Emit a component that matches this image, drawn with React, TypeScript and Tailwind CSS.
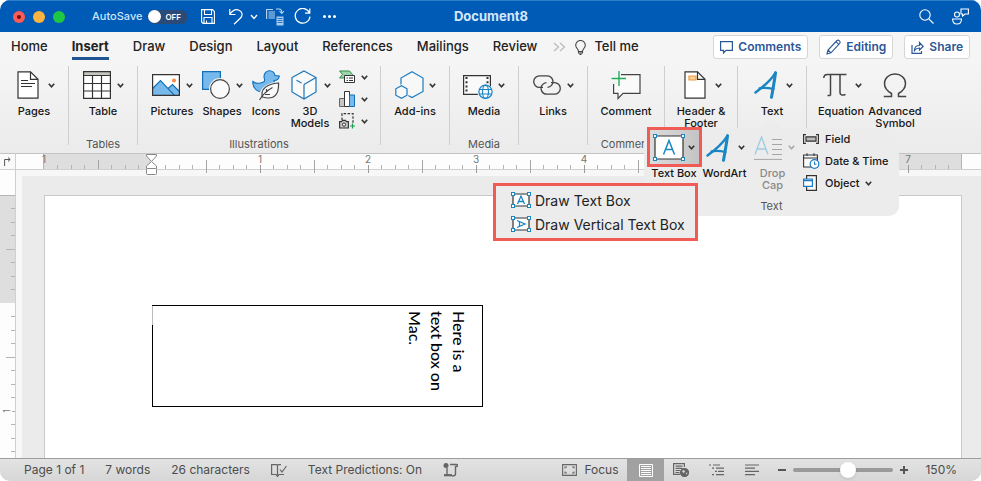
import { useState } from "react"
import type { ReactNode } from "react"

const INCH = 108

function Chevron({ faded }: { faded?: boolean }) {
  return (
    <svg width="7" height="5" viewBox="0 0 7 5" fill="none" className={faded ? "text-[#aaa]" : "text-[#333]"}>
      <path d="M0.8 0.8 3.5 3.8 6.2 0.8" stroke="currentColor" strokeWidth="1.6" />
    </svg>
  )
}

interface ToolProps {
  label: ReactNode
  icon: ReactNode
  menu?: boolean
  width?: string
}

function Tool({ label, icon, menu, width = "w-[50px]" }: ToolProps) {
  return (
    <button className={`flex flex-col items-center pt-2 ${width}`}>
      <span className="flex h-[30px] items-center gap-[5px]">
        <span className="flex w-[30px] justify-center">{icon}</span>
        {menu && <Chevron />}
      </span>
      <span className="mt-[5px] whitespace-nowrap text-center text-[11px] font-medium leading-[12px] text-[#161616]">{label}</span>
    </button>
  )
}

function Group({ caption, width, children, last }: { caption?: string; width: string; children: ReactNode; last?: boolean }) {
  return (
    <>
      <div className={`flex shrink-0 flex-col ${width}`}>
        <div className="flex h-[76px] justify-center">{children}</div>
        <p className="text-center text-[11px] leading-[12px] text-[#555]">{caption}</p>
      </div>
      {!last && <div className="mt-1 h-[79px] w-px shrink-0 bg-[#cfcfcf]" />}
    </>
  )
}

/* ---------- ribbon icons ---------- */

function PagesIcon() {
  return (
    <svg width="22" height="28" viewBox="0 0 22 28" fill="none" stroke="#333" strokeWidth="1.2">
      <path d="M1 .8H13.5L21 8.3V27.2H1Z" fill="#fff" />
      <path d="M13.5.8V8.3H21M4 9.5h7M4 12.5h14M4 15.5h11" />
    </svg>
  )
}

function TableIcon() {
  return (
    <svg width="28" height="28" viewBox="0 0 28 28" fill="none" stroke="#333" strokeWidth="1.2">
      <path d="M.6.6H27.4V27.4H.6Z" fill="#fff" />
      <path d="M.6.6H27.4V4.5H.6Z" fill="#c4c6c0" />
      <path d="M.6 12.5H27.4M.6 20H27.4M9.5 4.5V27.4M18.5 4.5V27.4" />
    </svg>
  )
}

function PicturesIcon() {
  return (
    <svg width="28" height="28" viewBox="0 0 28 28" fill="none">
      <path d="M.6 3.6H27.4V24.4H.6Z" fill="#fff" />
      <path d="M.6 17.5 8.5 9.5 16 17.5 20.5 13.5 27.4 20.5V24.4H.6Z" fill="#76b9ea" />
      <path d="M.6 17.5 8.5 9.5 22.5 24.4M16 17.5 20.5 13.5 27.4 20.5" stroke="#0f6fba" strokeWidth="1.2" />
      <circle cx="22" cy="9.5" r="2" fill="#f48b45" />
      <path d="M.6 3.6H27.4V24.4H.6Z" stroke="#333" strokeWidth="1.2" />
    </svg>
  )
}

function ShapesIcon() {
  return (
    <svg width="28" height="28" viewBox="0 0 28 28">
      <path d="M.6.6H18.4V18.4H.6Z" fill="#76b9ea" stroke="#0f6fba" strokeWidth="1.2" />
      <circle cx="18" cy="18" r="11" fill="#f2f2f2" />
      <circle cx="18" cy="18" r="9.4" fill="#fafafa" stroke="#444" strokeWidth="1.2" />
    </svg>
  )
}

function DuckIcon() {
  return (
    <svg width="28" height="30" viewBox="0 0 28 30">
      <path
        d="M.8 11.5C4 14 8 13.5 11.5 12 14 11 12 9 12 6.5 12 3 14.5.8 17.500.8 20.5.8 22.8 3 22.9 5.5L27.3 6C27 9 25 10.5 22 10.5 22 13 25 14 24.5 17.5 23.5 21.5 19 22.5 14 22.5 6 22.5.5 19 .8 11.5Z"
        fill="#76b9ea" stroke="#0f6fba" strokeWidth="1.1"
      />
      <path d="M7 30C6 20 12 13 28 11V20C26 29 19 31 10 28.5Z" fill="#f1f1f1" />
      <path d="M10.5 27C8 19 15 14 26.5 13 27 22 24 31 10.5 27Z" fill="#fafafa" stroke="#444" strokeWidth="1.2" />
      <path d="M7.5 30C11 24 15 20.5 20.5 17.5M14.5 22.5V19M13 24.5H18" fill="none" stroke="#444" strokeWidth="1.1" />
    </svg>
  )
}

function CubeIcon() {
  return (
    <svg width="26" height="30" viewBox="0 0 26 30" fill="none" stroke="#1a75ba" strokeWidth="1.2">
      <path d="M13 1 25 7.5V22L13 29 1 22V7.5Z" fill="#fafafa" />
      <path d="M13 14.5 25 7.5M13 14.5V29M5.5 10.2 10.5 13" />
    </svg>
  )
}

function SmartArtIcon() {
  return (
    <svg width="16" height="14" viewBox="0 0 16 14">
      <path d="M.6 1H10.5L13.5 4.5 10.5 8H.6L3.5 4.5Z" fill="#9bd6a8" stroke="#2f8c4b" />
      <path d="M5.5 5.5H15.5V12.5H5.5Z" fill="#fff" stroke="#333" />
      <path d="M7.5 8H9M10 8H14M7.5 10.5H9M10 10.5H14" stroke="#333" />
    </svg>
  )
}

function BarsIcon() {
  return (
    <svg width="16" height="16" viewBox="0 0 16 16">
      <path d="M.5 7.5H5.5V15.5H.5Z" fill="#c6c6c6" stroke="#666" />
      <path d="M5.5.5H10.5V15.5H5.5Z" fill="#fff" stroke="#333" />
      <path d="M10.5 4H15.5V15.5H10.5Z" fill="#76b9ea" stroke="#0f6fba" />
    </svg>
  )
}

function ScreenshotIcon() {
  return (
    <svg width="17" height="16" viewBox="0 0 17 16" fill="none">
      <path d="M3 7V.6H14V10" stroke="#333" strokeWidth="1.2" strokeDasharray="2.5 1.5" />
      <path d="M.6 8.6H2.5L3.5 7.4H6.5L7.5 8.6H9.4V15H.6Z" fill="#c6c6c6" stroke="#333" strokeWidth="1.1" />
      <circle cx="5" cy="11.6" r="1.6" fill="#fff" stroke="#333" />
      <path d="M13.5 10.5V15.5M11 13H16" stroke="#1d9e4f" strokeWidth="1.2" />
    </svg>
  )
}

function AddInsIcon() {
  return (
    <svg width="29" height="28" viewBox="0 0 29 28" fill="#f8f8f8" stroke="#1a7cc2" strokeWidth="1.2">
      <path d="M17 .8 28 7V20.5L17 26.5 6 20.5V7Z" />
      <path d="M6.5 13 13.5 17V25L6.5 29-.5 25V17Z" fill="#f0f0f0" stroke="none" />
      <path d="M6.5 14.7 12 17.8V24.2L6.5 27.3 .8 24.2V17.8Z" />
    </svg>
  )
}

function MediaIcon() {
  return (
    <svg width="30" height="28" viewBox="0 0 30 28" fill="none">
      <path d="M.6 4.6H27.4V23.4H.6Z" fill="#fafafa" stroke="#333" strokeWidth="1.2" />
      <path d="M3.5 6V22.5M24.5 6V22.5" stroke="#333" strokeWidth="2" strokeDasharray="2 2.2" />
      <circle cx="22.5" cy="21.5" r="8" fill="#f1f1f1" />
      <g stroke="#1a86c8" strokeWidth="1.2">
        <circle cx="22.5" cy="20.8" r="6.6" fill="#fafafa" />
        <ellipse cx="22.5" cy="20.8" rx="3" ry="6.6" />
        <path d="M16.5 18.5H28.5M16.5 23H28.5" />
      </g>
    </svg>
  )
}

function LinksIcon() {
  return (
    <svg width="28" height="20" viewBox="0 0 28 20" fill="none" stroke="#444" strokeWidth="1.3">
      <path d="M10 12.4H6.5A5.8 5.8 0 0 1 6.5.8H14A5.8 5.8 0 0 1 18.5 10.4 5.8 5.8 0 0 1 14.5 12.4" />
      <path d="M18 7.6H21.5A5.8 5.8 0 0 1 21.5 19.2H14A5.8 5.8 0 0 1 9.5 9.6 5.8 5.8 0 0 1 13.5 7.6" />
    </svg>
  )
}

function CommentIcon() {
  return (
    <svg width="30" height="30" viewBox="0 0 30 30" fill="none">
      <path d="M2.6 4.6H29V23.4H12L7 28.5V23.4H2.6Z" fill="#fafafa" stroke="#444" strokeWidth="1.2" />
      <path d="M0 1H8V14H0Z" fill="#f2f2f2" />
      <path d="M8 1V16M0 8.5H15" stroke="#fafafa" strokeWidth="4" />
      <path d="M8 1V16M.5 8.5H15" stroke="#1fae5a" strokeWidth="1.4" />
    </svg>
  )
}

function HeaderIcon() {
  return (
    <svg width="22" height="28" viewBox="0 0 22 28" fill="none" stroke="#333" strokeWidth="1.2">
      <path d="M1 .8H13.5L21 8.3V27.2H1Z" fill="#fff" />
      <path d="M13.5.8V8.3H21" />
      <path d="M5 5H12V9H5Z" fill="#fbd29a" stroke="#f09a3e" />
    </svg>
  )
}

function BrushA({ width = 24, height = 28 }: { width?: number; height?: number }) {
  return (
    <svg width={width} height={height} viewBox="0 0 24 28" fill="none" stroke="#1a86c2" strokeLinejoin="round" strokeLinecap="round">
      <path d="M1.5 21.5C9 16 17 9 21.5 1.8" strokeWidth="2.5" />
      <path d="M21.5 1.8C20.500 10 19 18 17.5 26.3" strokeWidth="3" />
      <path d="M5.5 17.3C10 16.6 15 17 19.5 18" strokeWidth="2.2" />
    </svg>
  )
}

function PiIcon() {
  return (
    <svg width="24" height="24" viewBox="0 0 24 24" fill="none" stroke="#444" strokeWidth="1.5">
      <path d="M.8 5C.8 2.5 2 1.5 4.5 1.5H23.5M7.5 1.5V22.5M4.5 22.5H7.5M17 1.5V19.5C17 22 19 22.7 22.5 21.5" />
    </svg>
  )
}

function OmegaIcon() {
  return (
    <svg width="24" height="25" viewBox="0 0 24 25" fill="none" stroke="#444" strokeWidth="1.5">
      <path d="M.8 23.5H8.5V20.5C4 18 1.5 15 1.5 10.5 1.5 5 6 1 12 1S22.5 5 22.5 10.5C22.5 15 20 18 15.5 20.5V23.5H23.2" />
    </svg>
  )
}

function Handles({ w, h }: { w: number; h: number }) {
  const spots = [[1, 1], [w - 1, 1], [1, h - 1], [w - 1, h - 1]]
  return (
    <>
      {spots.map(([x, y]) => (
        <rect key={`${x}-${y}`} x={x - 1.5} y={y - 1.5} width="3" height="3" fill="#fff" stroke="#1a86c2" />
      ))}
    </>
  )
}

function TextBoxIcon() {
  return (
    <svg width="32" height="27" viewBox="-1 -1 32 27" fill="none" className="shrink-0">
      <path d="M1 1H29V24H1Z" fill="#fff" stroke="#333" strokeWidth="1.2" />
      <path d="M9.5 19.5 15 5.5 20.5 19.5M11.5 14.5H18.5" stroke="#1a86c2" strokeWidth="1.5" />
      <Handles w={30} h={25} />
    </svg>
  )
}

function SmallBoxIcon({ vertical }: { vertical?: boolean }) {
  return (
    <svg width="20" height="16" viewBox="-1 -1 20 16" fill="none" className="shrink-0">
      <path d="M1 1H17V13H1Z" fill="#fff" stroke="#333" strokeWidth="1.2" />
      <path
        d="M5.5 11 9 3 12.5 11M6.8 8.5H11.2"
        stroke="#1a86c2"
        strokeWidth="1.3"
        transform={vertical ? "rotate(90 9 7)" : undefined}
      />
      <Handles w={18} h={14} />
    </svg>
  )
}

function DropCapIcon() {
  return (
    <svg width="29" height="24" viewBox="0 0 29 24" fill="none">
      <path d="M1 18.5 7.5 1 14 18.5M3.5 13H11.5" stroke="#9ccbe0" strokeWidth="1.3" />
      <path d="M18 3.5H28M18 8.5H28M18 13.5H28M18 18.5H28M0 23.4H28" stroke="#a6a6a6" />
    </svg>
  )
}

function FieldIcon() {
  return (
    <svg width="16" height="10" viewBox="0 0 16 10" fill="none" stroke="#333" strokeWidth="1.2">
      <path d="M3 .6H.6V9.4H3M13 .6H15.4V9.4H13" />
      <path d="M3 2.8H13V7.2H3Z" fill="#bbb" />
    </svg>
  )
}

function DateIcon() {
  return (
    <svg width="17" height="16" viewBox="0 0 17 16" fill="none" stroke="#333" strokeWidth="1.1">
      <path d="M.6 2H14.4V14H.6Z" fill="#fafafa" />
      <path d="M.6 5H14.4M4 .3V3M11 .3V3" />
      <circle cx="11.5" cy="11" r="4.3" fill="#fff" stroke="#1a7cc2" strokeWidth="1.2" />
      <path d="M11.5 8.5V11.2H13.5" stroke="#1a7cc2" />
    </svg>
  )
}

function ObjectIcon() {
  return (
    <svg width="15" height="16" viewBox="0 0 15 16" fill="none" strokeWidth="1.2">
      <path d="M3.6.6H13.4V15.4H3.6Z" fill="#fafafa" stroke="#333" />
      <path d="M.6 4H9.4V11.4H.6Z" fill="#fff" stroke="#1a7cc2" />
      <path d="M.6 5.5H9.4" stroke="#1a7cc2" strokeWidth="1.6" />
    </svg>
  )
}

/* ---------- title bar ---------- */

function TitleBar() {
  const [autoSave, setAutoSave] = useState(false)
  return (
    <header className="flex h-8 shrink-0 items-center border-t border-[#2d7fca] bg-[#005bb7] text-white">
      <div className="flex flex-1 items-center pl-[13px]">
        <div className="flex gap-2">
          <button aria-label="Close" className="flex size-3 items-center justify-center rounded-full bg-[#fc5b57]">
            <span className="size-1 rounded-full bg-[#730c0a]" />
          </button>
          <button aria-label="Minimize" className="size-3 rounded-full bg-[#fdb43f]" />
          <button aria-label="Zoom" className="size-3 rounded-full bg-[#1ec845]" />
        </div>
        <label className="relative ml-[27px] flex items-center gap-[6px] text-[11px] font-medium text-[#cfe4f8]">
          AutoSave
          <input type="checkbox" className="sr-only" checked={autoSave} onChange={e => setAutoSave(e.target.checked)} />
          <span className="flex h-[14px] w-10 items-center gap-[4px] rounded-full bg-[#2a4a78] text-[8px] font-semibold text-white">
            <span className="size-[13px] rounded-full bg-white" />
            OFF
          </span>
        </label>
        <button aria-label="Save" className="ml-[13px]">
          <svg width="14" height="15" viewBox="0 0 14 15" fill="none" stroke="#fff" strokeWidth="1.1">
            <path d="M.6.6H11.5L13.4 2.5V14.4H2L.6 13Z" />
            <path d="M3.5.6V5.5H10.5V.6M3 14.4V8.5H11V14.4M5.5 11.5V14.4" />
          </svg>
        </button>
        <button aria-label="Undo" className="ml-[14px]">
          <svg width="14" height="17" viewBox="0 0 14 17" fill="none" stroke="#fff" strokeWidth="1.2">
            <path d="M.8 1V6.5H6.5M.8 6.5C3.5 2.5 7 1 10 2.2 13.5 3.7 14 7.5 11.5 10L5 16.3" />
          </svg>
        </button>
        <button aria-label="Undo history" className="ml-[7px]">
          <svg width="8" height="6" viewBox="0 0 8 6" fill="none" stroke="#fff" strokeWidth="1.3"><path d="M1 1 4 4.5 7 1" /></svg>
        </button>
        <button aria-label="Paste special" className="ml-2">
          <svg width="18" height="18" viewBox="0 0 18 18" fill="none" stroke="#b9d7f3" strokeWidth="1.1">
            <path d="M.6 11V1.5H7M2.5 4H9M2.5 6H9M2.5 8H9M2.5 10H9M10 1H13C15 1 15.8 2.5 15.8 4.5M13.5 3 15.8 5.5 18 3" />
            <path d="M10.5 8.5H17.5V17.5H10.5Z" fill="#a9cdef" stroke="none" />
            <path d="M11.5 10.5H16.5M11.5 12.5H16.5M11.5 14.5H16.5" stroke="#2a74c2" />
          </svg>
        </button>
        <button aria-label="Redo" className="ml-[10px]">
          <svg width="17" height="17" viewBox="0 0 17 17" fill="none" stroke="#fff" strokeWidth="1.2">
            <path d="M15.5 5A7.4 7.4 0 1 0 16 8.5M15.8.5V5.2H11" />
          </svg>
        </button>
        <button aria-label="More" className="ml-3 flex gap-[2px]">
          <span className="size-[3px] rounded-full bg-white" />
          <span className="size-[3px] rounded-full bg-white" />
          <span className="size-[3px] rounded-full bg-white" />
        </button>
      </div>
      <h1 className="text-[13px] font-bold text-[#d5e8fb]">Document8</h1>
      <div className="flex flex-1 items-center justify-end gap-[18px] pr-3">
        <button aria-label="Search">
          <svg width="15" height="15" viewBox="0 0 15 15" fill="none" stroke="#fff" strokeWidth="1.1">
            <circle cx="6" cy="6" r="5.2" />
            <path d="M9.8 9.8 14.5 14.5" />
          </svg>
        </button>
        <button aria-label="Presence">
          <svg width="17" height="17" viewBox="0 0 17 17" fill="none" stroke="#fff" strokeWidth="1.1">
            <circle cx="5" cy="6.5" r="2.5" />
            <path d="M.6 11H9.5C9.5 14.5 8 16 5 16S.6 14.5.6 11ZM9 1H16.4V6H13L10.5 8V6H9Z" />
          </svg>
        </button>
      </div>
    </header>
  )
}

/* ---------- tabs ---------- */

const tabs = ["Home", "Insert", "Draw", "Design", "Layout", "References", "Mailings", "Review"]

function TabRow() {
  const [active, setActive] = useState("Insert")
  const action = "flex h-6 items-center gap-[5px] rounded-[3px] border border-[#d6d6d6] bg-white px-[6px] text-[12px] font-semibold text-[#2b5797]"
  return (
    <nav className="flex h-[30px] shrink-0 items-center justify-between bg-[#f5f5f5] pl-[11px] pr-[11px]">
      <div className="flex items-center gap-6 text-[13px] font-medium text-[#222]">
        {tabs.map(tab => (
          <button
            key={tab}
            onClick={() => setActive(tab)}
            className={`flex h-[26px] items-center border-y-[3px] border-t-transparent ${tab === active ? "border-b-[#1f5592] font-bold" : "border-b-transparent"}`}
          >
            {tab}
          </button>
        ))}
        <div className="-ml-2 flex items-center gap-[9px]">
          <button aria-label="More tabs">
            <svg width="13" height="10" viewBox="0 0 13 10" fill="none" stroke="#bbb" strokeWidth="1.3"><path d="M1 1 5.5 5 1 9M7 1 11.5 5 7 9" /></svg>
          </button>
          <button className="flex items-center gap-2">
            <svg width="11" height="15" viewBox="0 0 11 15" fill="none" stroke="#444" strokeWidth="1.1">
              <path d="M3.5 11.5C3.5 9 .7 8 .7 5.2A4.8 4.7 0 0 1 10.3 5.2C10.3 8 7.5 9 7.5 11.5ZM3.5 11.5V13H7.5V11.5M4.5 14.4H6.5" />
            </svg>
            Tell me
          </button>
        </div>
      </div>
      <div className="flex gap-[11px]">
        <button className={action}>
          <svg width="13" height="13" viewBox="0 0 13 13" fill="none" stroke="currentColor" strokeWidth="1.2"><path d="M.6.6H12.4V9.4H6L3.5 12V9.4H.6Z" /></svg>
          Comments
        </button>
        <button className={action}>
          <svg width="15" height="16" viewBox="0 0 15 16" fill="none" stroke="currentColor" strokeWidth="1.1">
            <path d="M1 15 2 11 11 1.5C12.5 .3 15 2.5 13.7 4.3L5 13.8ZM10 2.7 12.7 5.4M2 11 5 13.8" />
          </svg>
          Editing
        </button>
        <button className={action}>
          <svg width="13" height="13" viewBox="0 0 13 13" fill="none" stroke="currentColor" strokeWidth="1.2">
            <path d="M1 4V12.4H10.5V10M3.5 9.5C3.5 6 5.5 4.5 8.5 4.5V1.5L12.2 5.5 8.5 9V7C6 7 4.5 8 3.5 9.5Z" />
          </svg>
          Share
        </button>
      </div>
    </nav>
  )
}

/* ---------- ribbon ---------- */

function Ribbon() {
  const mini = "flex h-[22px] w-8 items-center justify-between pr-[3px]"
  return (
    <section className="relative z-10 flex h-[92px] shrink-0 border-b border-[#c4c4c4] bg-gradient-to-b from-[#f5f5f5] to-[#ebebeb]">
      <Group width="w-[68px]"><Tool label="Pages" icon={<PagesIcon />} menu /></Group>
      <Group width="w-[68px]" caption="Tables"><Tool label="Table" icon={<TableIcon />} menu /></Group>
      <Group width="w-[242px]" caption="Illustrations">
        <Tool label="Pictures" icon={<PicturesIcon />} menu />
        <Tool label="Shapes" icon={<ShapesIcon />} menu />
        <Tool label="Icons" icon={<DuckIcon />} width="w-[38px]" />
        <Tool label={<>3D<br />Models</>} icon={<CubeIcon />} menu />
        <div className="ml-1 flex flex-col pt-1">
          <button aria-label="SmartArt" className={mini}><SmartArtIcon /><Chevron /></button>
          <button aria-label="Chart" className={mini}><BarsIcon /><Chevron /></button>
          <button aria-label="Screenshot" className={mini}><ScreenshotIcon /><Chevron /></button>
        </div>
      </Group>
      <Group width="w-[68px]"><Tool label="Add-ins" icon={<AddInsIcon />} menu /></Group>
      <Group width="w-[68px]" caption="Media"><Tool label="Media" icon={<MediaIcon />} menu /></Group>
      <Group width="w-[68px]"><Tool label="Links" icon={<LinksIcon />} menu /></Group>
      <Group width="w-[76px]" caption="Comment"><Tool label="Comment" icon={<CommentIcon />} /></Group>
      <Group width="w-[72px]"><Tool label={<>Header &amp;<br />Footer</>} icon={<HeaderIcon />} menu /></Group>
      <Group width="w-[68px]"><Tool label="Text" icon={<BrushA />} menu /></Group>
      <Group width="w-[122px]" last>
        <Tool label="Equation" icon={<PiIcon />} menu width="w-[54px]" />
        <Tool label={<>Advanced<br />Symbol</>} icon={<OmegaIcon />} width="w-[54px]" />
      </Group>
      <TextPanel />
    </section>
  )
}

function TextPanel() {
  const small = "whitespace-nowrap text-center text-[11px] font-medium leading-[12px]"
  return (
    <div className="absolute left-[644px] top-[66px] h-[88px] w-[255px] rounded-r-[10px] bg-[#ececec]">
      <svg width="22" height="9" viewBox="0 0 22 9" className="absolute -top-[9px] left-[116px]"><path d="M0 9 11 0 22 9Z" fill="#ececec" /></svg>
      <div className="flex items-start">
        <button className="-mt-px flex w-[60px] flex-col items-center text-[#161616]">
          <span className="flex h-10 w-[55px] items-center justify-center gap-[3px] border-[3px] border-[#f05b55] bg-gradient-to-r from-[#dcdcdc] to-[#c4c4c4]">
            <TextBoxIcon />
            <Chevron />
          </span>
          <span className={small}>Text Box</span>
        </button>
        <button className="flex w-[41px] flex-col items-center text-[#161616]">
          <span className="flex h-[39px] items-center gap-[7px]"><BrushA width={26} height={28} /><Chevron /></span>
          <span className={small}>WordArt</span>
        </button>
        <button disabled className="flex w-[55px] flex-col items-center text-[#8a8a8a]">
          <span className="flex h-[39px] items-center gap-[5px] pl-1"><DropCapIcon /><Chevron faded /></span>
          <span className={small}>Drop<br />Cap</span>
        </button>
        <div className="ml-[3px] flex flex-col text-[11px] font-medium text-[#161616]">
          <button className="flex h-[22px] items-center gap-[5px]"><span className="w-[17px]"><FieldIcon /></span>Field</button>
          <button className="flex h-[22px] items-center gap-[5px] whitespace-nowrap"><span className="w-[17px]"><DateIcon /></span>Date &amp; Time</button>
          <button className="flex h-[22px] items-center gap-[5px]"><span className="w-[17px]"><ObjectIcon /></span>Object<Chevron /></button>
        </div>
      </div>
      <p className="absolute inset-x-0 bottom-1 text-center text-[11px] leading-[12px] text-[#555]">Text</p>
      <div className="absolute -left-[151px] top-[55px] flex w-[205px] flex-col border-[3px] border-[#f05b55] bg-[#ececec] py-[2px] pl-[15px] text-[14px] text-[#222]">
        <button className="flex h-6 items-center gap-[4px] whitespace-nowrap"><SmallBoxIcon />Draw Text Box</button>
        <button className="flex h-6 items-center gap-[4px] whitespace-nowrap"><SmallBoxIcon vertical />Draw Vertical Text Box</button>
      </div>
    </div>
  )
}

/* ---------- rulers ---------- */

function HorizontalRuler() {
  const zero = 136
  const steps = Array.from({ length: 68 }, (_, i) => i - 7)
  return (
    <svg className="h-[22px] w-full shrink-0">
      <rect width="100%" height="15" fill="#fdfdfd" />
      <rect x="27" width="108" height="15" fill="#dedede" />
      <rect x="838" width="108" height="15" fill="#dedede" />
      <rect y="15" width="100%" height="1" fill="#d0d0d0" />
      <path d="M27.5 0V15M945.5 0V15" stroke="#b5b5b5" />
      {steps.map(i => {
        const x = Math.floor(zero + (i * INCH) / 8)
        if (i === 0 || x > 944) return null
        if (i % 8 === 0) return <rect key={i} x={x} y="11" width="1" height="8" fill="#9a9a9a" />
        if (i % 4 === 0) return <rect key={i} x={x} y="6" width="1" height={i < 0 ? 9 : 13} fill="#a5a5a5" />
        return <rect key={i} x={x} y="11" width="1" height="4" fill="#b5b5b5" />
      })}
      {[1, 2, 3, 4, 5, 6, 7].map(n => (
        <text key={n} x={zero + n * INCH} y="9" textAnchor="middle" fontSize="10" fill="#777">{n}</text>
      ))}
      <text x="28" y="9" textAnchor="middle" fontSize="10" fill="#777">1</text>
      <g fill="#fff" stroke="#888">
        <path d="M130.5 .5H140.5V2L135.5 7.5 130.5 2Z" />
        <path d="M135.5 7.5 140.5 12V14.5H130.5V12Z" />
        <rect x="130.5" y="14.5" width="10" height="6" rx="1" />
      </g>
    </svg>
  )
}

function VerticalRuler() {
  // starts 25px above the page edge, with a one inch top margin
  const zero = 133
  const steps = Array.from({ length: 60 }, (_, i) => i - 7)
  return (
    <svg className="h-0 min-h-0 w-full flex-1">
      <rect width="15" height="100%" fill="#fdfdfd" />
      <rect y="25" width="15" height="108" fill="#dedede" />
      <path d="M0 25.5H15" stroke="#b5b5b5" />
      {steps.map(i => {
        if (i === 0) return null
        const len = i % 4 === 0 ? 9 : 4
        if (i % 8 === 0) return <rect key={i} x="12" y={Math.floor(zero + (i * INCH) / 8)} width="3" height="1" fill="#aaa" />
        return <rect key={i} x={15 - len} y={Math.floor(zero + (i * INCH) / 8)} width={len} height="1" fill="#b5b5b5" />
      })}
      <text transform={`translate(10 ${zero + INCH}) rotate(-90)`} textAnchor="middle" fontSize="9" fill="#777">1</text>
    </svg>
  )
}

function Workspace() {
  return (
    <main className="flex min-h-0 flex-1">
      <div className="flex w-4 shrink-0 flex-col border-r border-[#d0d0d0]">
        <button aria-label="Tab stop" className="flex h-4 items-center justify-center border-b border-[#d0d0d0] bg-[#fafafa]">
          <svg width="7" height="9" viewBox="0 0 7 9" fill="none" stroke="#555"><path d="M.6 9V2.5H6M4 .5 6.2 2.5 4 4.5" /></svg>
        </button>
        <VerticalRuler />
      </div>
      <div className="flex min-w-0 flex-1 flex-col bg-[#f7f7f7]">
        <HorizontalRuler />
        <div className="ml-[6px] flex min-h-0 flex-1 bg-[#ebebeb] pl-[22px] pr-[19px] pt-[19px]">
          <div className="flex-1 border border-b-0 border-[#c9c9c9] bg-white pl-[107px] pt-[109px]">
            <div className="relative h-[102px] w-[331px] border border-black py-[5px] pr-[12px]">
              <span className="absolute -left-px top-0 h-[19px] w-px bg-[#bbb]" />
              <p className="ml-auto h-full font-['Lato',sans-serif] text-[16px] font-medium leading-[22px] text-black [writing-mode:vertical-rl]">
                Here is a<br />text box on<br />Mac.
              </p>
            </div>
          </div>
        </div>
      </div>
    </main>
  )
}

/* ---------- status bar ---------- */

function StatusBar() {
  const [zoom, setZoom] = useState(55)
  return (
    <footer className="flex h-[23px] shrink-0 items-center justify-between border-t border-[#9d9d9d] bg-gradient-to-b from-[#e3e3e3] to-[#d6d6d6] pl-6 pr-6 text-[12px] text-[#4c4c4c]">
      <div className="flex items-center gap-[21px]">
        <button>Page 1 of 1</button>
        <button>7 words</button>
        <button>26 characters</button>
        <button aria-label="Proofing">
          <svg width="16" height="13" viewBox="0 0 16 13" fill="none" stroke="#666" strokeWidth="1.2">
            <path d="M10 .6H7.5L6.5 1.5 5.5.6H.6V10.5H5L6.5 12.5 8 10.5H13M6.5 1.5V12M9 5.5 11 8 15.5 2" />
          </svg>
        </button>
        <button>Text Predictions: On</button>
        <button aria-label="Macro recording">
          <svg width="15" height="14" viewBox="0 0 15 14" fill="none" stroke="#666" strokeWidth="1.4">
            <circle cx="3" cy="2.5" r="2.5" fill="#666" stroke="none" />
            <path d="M7 1.5H13.5C14.8 1.5 14.8 3.5 13.5 3.5H12.5V11C12.5 13 11 13 9 13M4 5V12" />
            <path d="M1 12.2H9" strokeWidth="2.2" />
          </svg>
        </button>
      </div>
      <div className="flex h-full items-center">
        <button className="flex items-center gap-[7px]">
          <svg width="15" height="12" viewBox="0 0 15 12" fill="none" stroke="#666" strokeWidth="1.1">
            <path d="M.6.6H14.4V11.4H.6Z" />
            <path d="M3 4.5V3H5M10 3H12V4.5M3 7.5V9H5M10 9H12V7.5" />
          </svg>
          Focus
        </button>
        <button aria-label="Print layout" className="ml-[9px] flex h-full w-[37px] items-center justify-center bg-[#a1a1a1]">
          <svg width="14" height="13" viewBox="0 0 14 13" fill="none" stroke="#fff">
            <path d="M.5.5H13.5V12.5H.5ZM2 2.5H12M2 4.5H12M2 6.5H12M2 8.5H12M2 10.5H12" />
          </svg>
        </button>
        <button aria-label="Web layout" className="ml-[9px]">
          <svg width="16" height="14" viewBox="0 0 16 14" fill="none" stroke="#666" strokeWidth="1.2">
            <path d="M7 11.4H.6V.6H11.4V4M2.5 3.2H9.5M2.5 5.4H9.5M2.5 7.5H7M2.5 9.5H6.5" />
            <circle cx="11.5" cy="9.5" r="4" fill="#666" />
            <path d="M9 8 11 7 12 8.5 11 10 10 9.5ZM13 10 14.5 9.5 13.5 12Z" fill="#ddd" stroke="none" />
          </svg>
        </button>
        <button aria-label="Outline" className="ml-5">
          <svg width="16" height="12" viewBox="0 0 16 12" fill="none" stroke="#666" strokeWidth="1.2">
            <path d="M0 1H2M4 1H11M3 4.2H5M7 4.2H15M6 7.4H8M9 7.4H15M3 10.6H5M7 10.6H15" />
          </svg>
        </button>
        <button aria-label="Draft" className="ml-5">
          <svg width="14" height="12" viewBox="0 0 14 12" fill="none" stroke="#666" strokeWidth="1.2">
            <path d="M0 1H14M0 4.2H10M0 7.4H14M0 10.6H10" />
          </svg>
        </button>
        <button aria-label="Zoom out" className="ml-[19px] h-[2px] w-2 bg-[#555]" />
        <input
          type="range"
          aria-label="Zoom"
          value={zoom}
          onChange={e => setZoom(Number(e.target.value))}
          className="ml-[7px] w-[100px] appearance-none bg-transparent [&::-webkit-slider-runnable-track]:h-1 [&::-webkit-slider-runnable-track]:rounded-full [&::-webkit-slider-runnable-track]:bg-[#9a9a9a] [&::-webkit-slider-thumb]:-mt-[6px] [&::-webkit-slider-thumb]:size-4 [&::-webkit-slider-thumb]:appearance-none [&::-webkit-slider-thumb]:rounded-full [&::-webkit-slider-thumb]:bg-white [&::-webkit-slider-thumb]:shadow"
        />
        <button aria-label="Zoom in" className="ml-[7px]">
          <svg width="8" height="8" viewBox="0 0 8 8" stroke="#555" strokeWidth="2"><path d="M4 0V8M0 4H8" /></svg>
        </button>
        <button className="ml-[17px]">150%</button>
      </div>
    </footer>
  )
}

export default function App() {
  return (
    <div className="flex h-screen flex-col overflow-hidden rounded-[10px] bg-[#ebebeb] font-['Inter',sans-serif]">
      <TitleBar />
      <TabRow />
      <Ribbon />
      <Workspace />
      <StatusBar />
    </div>
  )
}
